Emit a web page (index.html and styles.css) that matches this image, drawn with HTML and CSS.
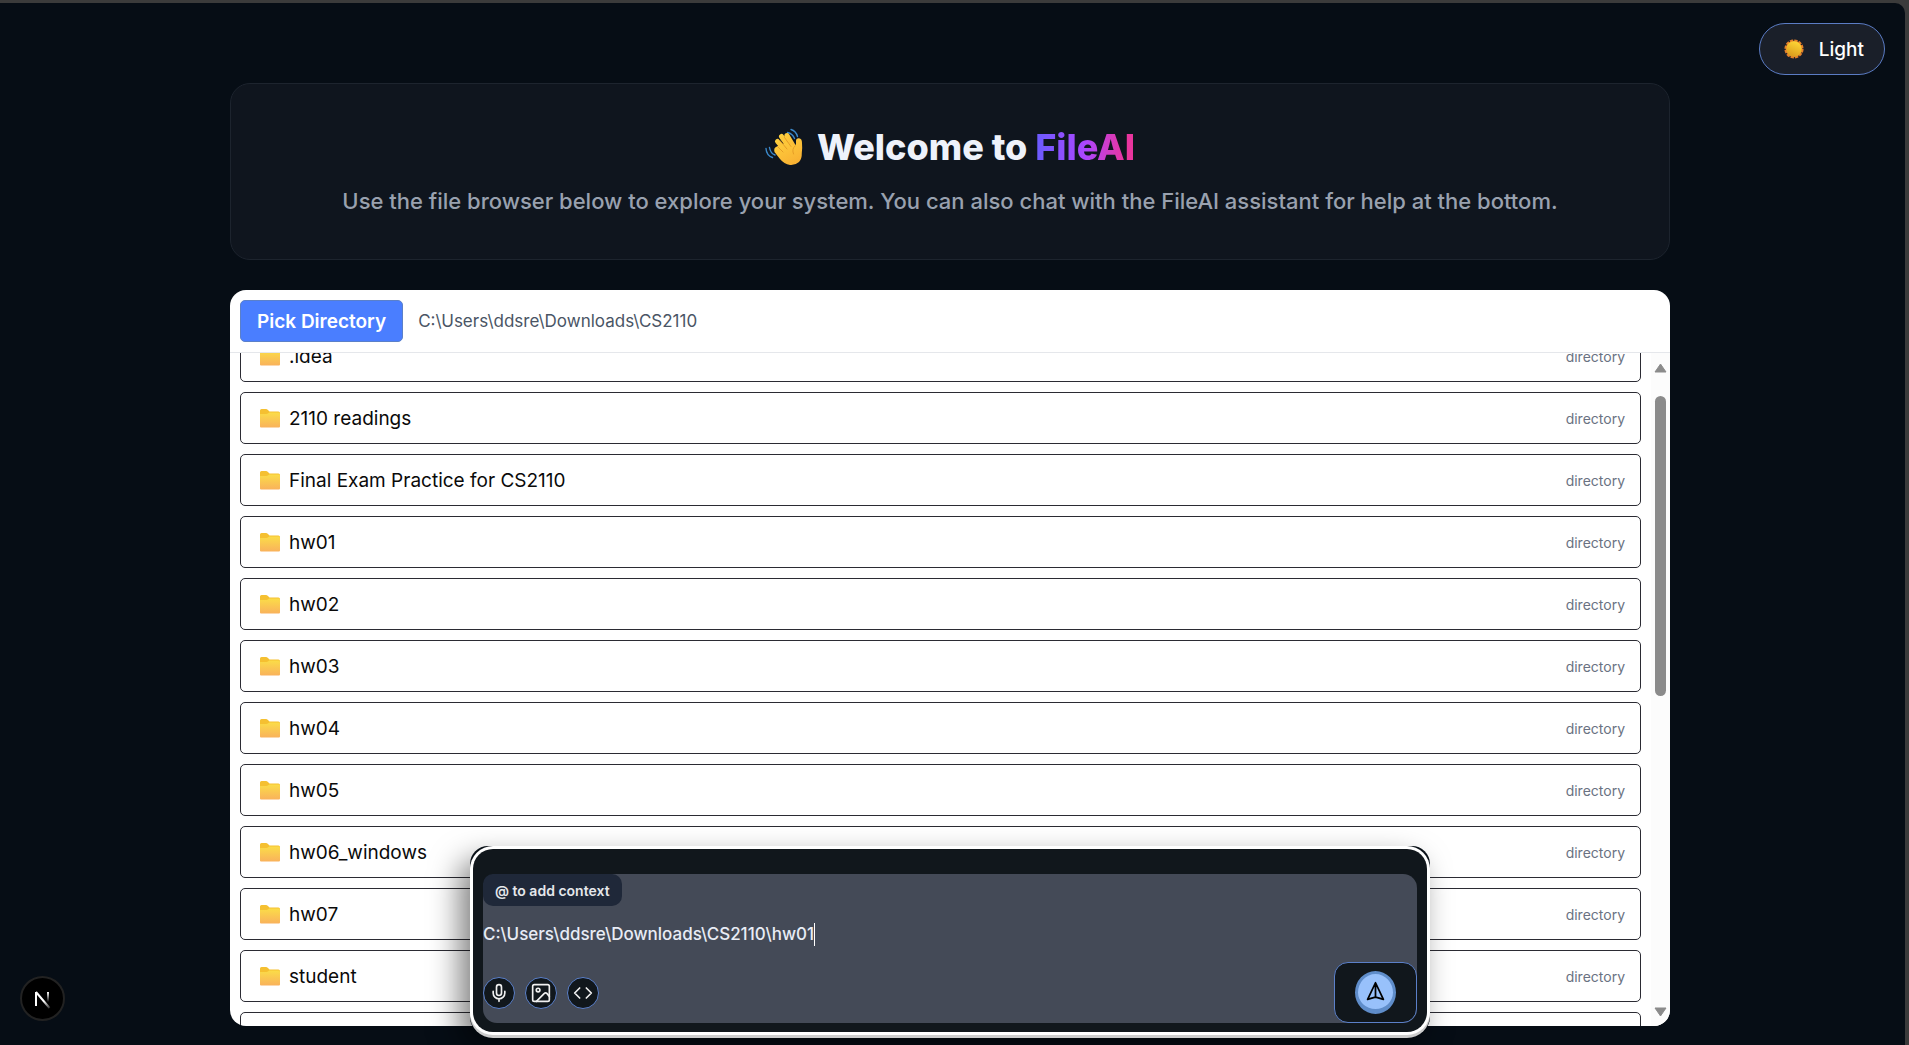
FILE: index.html
```html
<!doctype html>
<html lang="en">
<head>
	<meta charset="utf-8">
	<title>FileAI</title>
	<link rel="stylesheet" href="styles.css">
</head>
<body>
	<svg class="sprite" aria-hidden="true">
		<defs>
			<linearGradient id="folderFront" x1="0" y1="0" x2="0" y2="1">
				<stop offset="0" stop-color="#fbdc48"/>
				<stop offset="1" stop-color="#f9b25c"/>
			</linearGradient>
			<linearGradient id="sunFill" x1="0.7" y1="0" x2="0.3" y2="1">
				<stop offset="0" stop-color="#ffd736"/>
				<stop offset="1" stop-color="#d99a1c"/>
			</linearGradient>
			<linearGradient id="handFill" x1="0" y1="0" x2="0.6" y2="1">
				<stop offset="0" stop-color="#ffd23e"/>
				<stop offset="1" stop-color="#f9b233"/>
			</linearGradient>
			<linearGradient id="nStem" x1="0" y1="0" x2="0" y2="1">
				<stop offset="0" stop-color="#fff"/>
				<stop offset="1" stop-color="#fff" stop-opacity="0"/>
			</linearGradient>
			<linearGradient id="nSlash" gradientUnits="userSpaceOnUse" x1="11" y1="12" x2="16.500" y2="19">
				<stop offset="0" stop-color="#fff"/>
				<stop offset="1" stop-color="#fff" stop-opacity="0.2"/>
			</linearGradient>
			<symbol id="folder" viewBox="0 0 20 20">
				<path fill="#f5c031" d="M0 2.500Q0 1 1.500 1H6Q7 1 7.700 1.700L9.500 3.500H18.500Q20 3.500 20 5V9H0Z"/>
				<path fill="url(#folderFront)" d="M0 6H6.500Q7.500 6 8.300 5.300L9.200 4.600H18.500Q20 4.600 20 6V18.500Q20 19.500 19 19.500H1Q0 19.500 0 18.500Z"/>
			</symbol>
		</defs>
	</svg>

	<div class="page">
		<button class="themeToggle" type="button">
			<svg class="sun" viewBox="0 0 20 20" aria-hidden="true">
				<circle cx="10" cy="10" r="8.300" fill="#e5802a" stroke="#e5802a" stroke-width="2.600" stroke-dasharray="3.200 1.150"/>
				<circle cx="10" cy="10" r="7.700" fill="url(#sunFill)"/>
			</svg>
			Light
		</button>

		<main class="content">
			<header class="welcome">
				<h1>
					<svg class="wave" viewBox="0 0 38 38" aria-hidden="true">
						<g fill="none" stroke="#3b88c9" stroke-width="1.400" stroke-linecap="round">
							<path d="M22.500 4.500Q27.500 5.500 29.500 10.500M26 1.500Q31 3 32.500 8.500M4.500 19.500Q5.500 25.500 10 27M1 20.500Q1.500 27.500 7.500 29.500"/>
						</g>
						<g stroke="url(#handFill)" stroke-width="5" stroke-linecap="round">
							<path d="M13 21L20 29M12.500 13.500L24 27M16.500 8.500L27 23M22 7.500L30 21"/>
						</g>
						<path fill="url(#handFill)" d="M11 19Q16 18 21 14L30 18Q31.500 16.500 31 13Q31 10 34 10.200Q37 10.500 37 15Q37.500 20 36.800 25Q37 31 34 34Q30 37.500 25 37Q19 36 15 31L9.500 24Q8.500 20 11 19Z"/>
						<path fill="none" stroke="#df9422" stroke-width="0.800" stroke-linecap="round" d="M12.500 18.500L18 24M15 12.500L22 21M19.500 9.500L26 18.500M30 18Q26.500 21 28.500 26"/>
					</svg>
					<span>Welcome to <span class="brand">FileAI</span></span>
				</h1>
				<p>Use the file browser below to explore your system. You can also chat with the FileAI assistant for help at the bottom.</p>
			</header>

			<section class="browser">
				<div class="toolbar">
					<button class="pick" type="button">Pick Directory</button>
					<span class="path">C:\Users\ddsre\Downloads\CS2110</span>
				</div>
				<div class="listArea">
					<ul class="files">
						<li><svg class="folder"><use href="#folder"/></svg><span class="name">.idea</span><span class="kind">directory</span></li>
						<li><svg class="folder"><use href="#folder"/></svg><span class="name">2110 readings</span><span class="kind">directory</span></li>
						<li><svg class="folder"><use href="#folder"/></svg><span class="name">Final Exam Practice for CS2110</span><span class="kind">directory</span></li>
						<li><svg class="folder"><use href="#folder"/></svg><span class="name">hw01</span><span class="kind">directory</span></li>
						<li><svg class="folder"><use href="#folder"/></svg><span class="name">hw02</span><span class="kind">directory</span></li>
						<li><svg class="folder"><use href="#folder"/></svg><span class="name">hw03</span><span class="kind">directory</span></li>
						<li><svg class="folder"><use href="#folder"/></svg><span class="name">hw04</span><span class="kind">directory</span></li>
						<li><svg class="folder"><use href="#folder"/></svg><span class="name">hw05</span><span class="kind">directory</span></li>
						<li><svg class="folder"><use href="#folder"/></svg><span class="name">hw06_windows</span><span class="kind">directory</span></li>
						<li><svg class="folder"><use href="#folder"/></svg><span class="name">hw07</span><span class="kind">directory</span></li>
						<li><svg class="folder"><use href="#folder"/></svg><span class="name">student</span><span class="kind">directory</span></li>
						<li></li>
					</ul>
					<div class="scrollbar" aria-hidden="true">
						<svg viewBox="0 0 13 10"><path d="M6.500 1L12 9H1Z"/></svg>
						<div class="track"><div class="thumb"></div></div>
						<svg viewBox="0 0 13 10"><path d="M6.500 9L1 1H12Z"/></svg>
					</div>
				</div>
			</section>

			<div class="chatDock">
				<form class="chat">
					<div class="composer">
						<button class="context" type="button">@ to add context</button>
						<div class="prompt">
							<input type="text" aria-label="Message" value="C:\Users\ddsre\Downloads\CS2110\hw01">
							<span class="caret"></span>
						</div>
						<div class="actions">
							<button class="tool" type="button" aria-label="Voice">
								<svg viewBox="0 0 24 24"><path d="M12 2a3 3 0 0 0-3 3v7a3 3 0 0 0 6 0V5a3 3 0 0 0-3-3ZM19 10v2a7 7 0 0 1-14 0v-2M12 19v3"/></svg>
							</button>
							<button class="tool" type="button" aria-label="Image">
								<svg viewBox="0 0 24 24"><rect x="2" y="2" width="20" height="20" rx="2"/><circle cx="8.500" cy="8.500" r="2.200"/><path d="M22 16l-3-3.500a2 2 0 0 0-3 0L6.500 22"/></svg>
							</button>
							<button class="tool" type="button" aria-label="Code">
								<svg viewBox="0 0 24 24"><path d="M16 18l6-6-6-6M8 6l-6 6 6 6"/></svg>
							</button>
							<button class="send" type="submit" aria-label="Send">
								<span class="disc"><svg viewBox="0 0 24 24"><path d="M12 2L21 21Q16 19.500 12 18.500Q8 19.500 3 21ZM12 3V18.500"/></svg></span>
							</button>
						</div>
					</div>
				</form>
			</div>
		</main>

		<button class="devBadge" type="button" aria-label="Dev tools">
			<svg viewBox="0 0 20 20">
				<path d="M3 17V3" stroke="#fff" stroke-width="2"/>
				<path d="M3 3L16.500 19" stroke="url(#nSlash)" stroke-width="2"/>
				<rect x="14" y="3" width="2" height="10" fill="url(#nStem)"/>
			</svg>
		</button>
	</div>
</body>
</html>
```
FILE: styles.css
```css
* {
	box-sizing: border-box;
}
body {
	margin: 0;
	background: #3b3b3b;
	font-family: Inter, "Liberation Sans", sans-serif;
}
button, input {
	font-family: inherit;
	margin: 0;
}
.sprite {
	position: absolute;
	width: 0;
	height: 0;
}

/* page shell */
.page {
	position: relative;
	height: calc(100vh - 3px);
	margin: 3px 4px 0 0;
	padding: 80px 5px 19px 0;
	background: #060d15;
	border-radius: 0 10px 0 0;
	overflow: hidden;
}
.content {
	position: relative;
	display: flex;
	flex-direction: column;
	gap: 30px;
	width: 76%;
	max-width: 1440px;
	height: 100%;
	margin: 0 auto;
}
.themeToggle {
	position: absolute;
	top: 20px;
	right: 20px;
	display: flex;
	align-items: center;
	gap: 15px;
	height: 52px;
	padding: 0 20px 0 24px;
	border: 1px solid #5b7cc4;
	border-radius: 26px;
	background: #1a1f29;
	color: #fff;
	font-size: 19px;
	font-weight: 500;
}
.sun {
	width: 20px;
	height: 20px;
}

/* welcome card */
.welcome {
	padding: 38px 20px 43px;
	border: 1px solid #1d242e;
	border-radius: 20px;
	background: #0f151e;
	text-align: center;
}
.welcome h1 {
	display: flex;
	justify-content: center;
	align-items: center;
	gap: 14px;
	margin: 0;
	color: #eef2fb;
	font-size: 36px;
	font-weight: 800;
	line-height: 50px;
}
.wave {
	width: 38px;
	height: 38px;
}
.brand {
	background: linear-gradient(90deg, #6a5cff, #ac46ff 50%, #e9359e 90%);
	-webkit-background-clip: text;
	background-clip: text;
	color: transparent;
}
.welcome p {
	margin: 14px 0 0;
	color: #99a1af;
	font-size: 22px;
	font-weight: 500;
	line-height: 30px;
}

/* file browser */
.browser {
	flex: 1;
	display: flex;
	flex-direction: column;
	min-height: 0;
	border-radius: 16px;
	background: #fff;
	overflow: hidden;
}
.toolbar {
	display: flex;
	align-items: center;
	gap: 15px;
	padding: 10px;
	border-bottom: 1px solid #e5e7eb;
}
.pick {
	height: 42px;
	padding: 0 16px;
	border: 1px solid #5b80c9;
	border-radius: 5px;
	background: #4a7eff;
	color: #fff;
	font-size: 19px;
	font-weight: 600;
}
.path {
	color: #4a5565;
	font-size: 17px;
}
.listArea {
	flex: 1;
	display: flex;
	min-height: 0;
	overflow: hidden;
}
/* list is scrolled a little, first row sits half under the toolbar */
.files {
	flex: 1;
	display: flex;
	flex-direction: column;
	gap: 10px;
	margin: -23px 10px 0;
	padding: 0;
	list-style: none;
}
.files li {
	display: flex;
	flex-shrink: 0;
	align-items: center;
	height: 52px;
	padding: 0 15px 0 19px;
	border: 1px solid #2b2b33;
	border-radius: 5px;
}
.folder {
	width: 20px;
	height: 20px;
	margin-right: 9px;
}
.name {
	flex: 1;
	color: #0a0a0a;
	font-size: 19px;
}
.kind {
	color: #6a7282;
	font-size: 14px;
}
.scrollbar {
	display: flex;
	flex-direction: column;
	align-items: center;
	gap: 23px;
	width: 19px;
	padding: 10px 0 9px;
	background: #fcfcfc;
}
.scrollbar svg {
	width: 13px;
	height: 10px;
	fill: #8b8b8b;
	stroke: #8b8b8b;
	stroke-linejoin: round;
}
.track {
	flex: 1;
}
.thumb {
	width: 11px;
	height: 51%;
	border-radius: 6px;
	background: #8b8b8b;
}

/* chat, floats over the browser */
.chatDock {
	position: absolute;
	bottom: -9px;
	left: 50%;
	width: 67%;
	max-width: 960px;
	transform: translateX(-50%);
	padding: 3px;
	border-radius: 18px;
	background: #0a1118;
	box-shadow: -10px 14px 30px rgba(0, 0, 0, 0.5);
}
.chat {
	padding: 25px 10px 9px;
	border-radius: 20px;
	background: #11171c;
	box-shadow: 0 0 0 3px #fff, 0 3px 0 3px #ccc;
}
.composer {
	border-radius: 14px;
	background: #444a57;
}
.context {
	display: block;
	height: 32px;
	padding: 0 12px;
	border: 0;
	border-radius: 10px;
	background: #1f2839;
	color: #e5e7eb;
	font-size: 14px;
	font-weight: 600;
}
.prompt {
	display: flex;
	align-items: center;
	height: 56px;
}
.prompt input {
	field-sizing: content;
	padding: 0;
	border: 0;
	outline: 0;
	background: none;
	color: #e8ecf5;
	font-size: 17px;
	font-weight: 500;
}
.caret {
	width: 1px;
	height: 23px;
	background: #fff;
}
.actions {
	display: flex;
	align-items: center;
	gap: 10px;
}
.tool {
	display: flex;
	align-items: center;
	justify-content: center;
	width: 32px;
	height: 32px;
	padding: 0;
	border: 1px solid #5b80c9;
	border-radius: 50%;
	background: #11171c;
}
.tool svg {
	width: 20px;
	height: 20px;
	fill: none;
	stroke: #f0f0f0;
	stroke-width: 2;
	stroke-linecap: round;
	stroke-linejoin: round;
}
.send {
	display: flex;
	align-items: center;
	justify-content: center;
	width: 83px;
	height: 61px;
	margin-left: auto;
	padding: 0;
	border: 1px solid #5b80c9;
	border-radius: 14px;
	background: #11171c;
}
.disc {
	display: flex;
	align-items: center;
	justify-content: center;
	width: 41px;
	height: 43px;
	border: 3px solid #5f8dca;
	border-bottom-width: 5px;
	border-radius: 50%;
	background: #98c1fb;
}
.disc svg {
	width: 21px;
	height: 21px;
	fill: none;
	stroke: #000;
	stroke-width: 2;
	stroke-linejoin: round;
}

.devBadge {
	position: absolute;
	bottom: 24px;
	left: 20px;
	display: flex;
	align-items: center;
	justify-content: center;
	width: 45px;
	height: 45px;
	padding: 0;
	border: 2px solid #222;
	border-radius: 50%;
	background: #000;
}
.devBadge svg {
	width: 20px;
	height: 20px;
}
```
